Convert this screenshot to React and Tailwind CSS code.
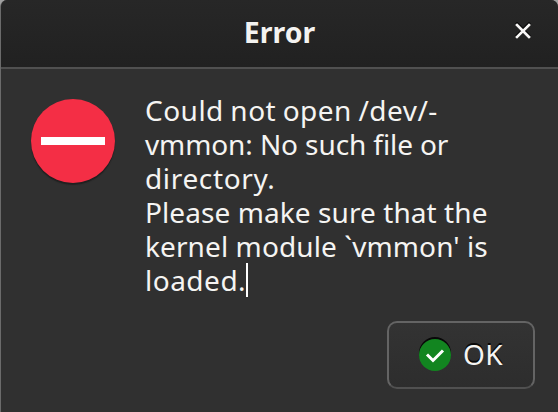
const lines = [
  { text: "Could not open /dev/-", style: "tracking-[0.48px] [word-spacing:-1.2px]" },
  { text: "vmmon: No such file or", style: "tracking-[-0.1px]" },
  { text: "directory.", style: "tracking-[0.65px]" },
  { text: "Please make sure that the", style: "tracking-[0.08px]" },
  { text: "kernel module `vmmon' is", style: "tracking-[0.1px]" },
  { text: "loaded.", style: "tracking-[0.5px]" },
];

function TitleBar() {
  return (
    <header className="grid h-[69px] shrink-0 grid-cols-[1fr_auto_1fr] items-center border-b-2 border-[#505050] bg-linear-to-b from-[#272727] to-[#212121] pb-[3px]">
      <span />
      <h1 className="text-[28.5px] leading-9 font-bold text-[#f4f3f1]">Error</h1>
      <button aria-label="Close" className="mr-[26px] mb-[2px] justify-self-end">
        <svg width="18" height="18" viewBox="0 0 18 18" fill="none" strokeWidth="2.6" strokeLinecap="square">
          <path d="M3 1.5 15 13.5M15 1.5 3 13.5" stroke="#080808" />
          <path d="M3 3 15 15M15 3 3 15" stroke="#f7f6f5" />
        </svg>
      </button>
    </header>
  );
}

export default function App() {
  return (
    <div className="h-[412px] w-[558px] overflow-hidden bg-[#a0a0a0] font-['Noto_Sans',sans-serif]">
      <div className="flex h-full flex-col overflow-hidden rounded-t-[7px] border-l border-[#6b6b6b] bg-[#303030]">
        <TitleBar />
        <main className="flex pt-[24px] pl-[30px]">
          <div className="mt-[6px] flex h-[84px] w-[84px] shrink-0 items-center justify-center rounded-full bg-[#f42e45] shadow-[0_2px_1px_#202020]">
            <div className="h-2 w-16 bg-white" />
          </div>
          <div className="ml-[30px] text-[28px] leading-[34px] whitespace-nowrap text-[#f5f4f2]">
            {lines.map((line, i) => (
              <div key={line.text} className="flex h-[34px]">
                <span className={line.style}>{line.text}</span>
                {i === lines.length - 1 && <i className="h-[34px] w-[2px] bg-white" />}
              </div>
            ))}
          </div>
        </main>
        <footer className="mt-[24px] flex justify-end pr-[23px]">
          <button className="flex h-[68px] w-[148px] items-center rounded-[10px] border-2 border-[#646464] border-b-[#505050] bg-linear-to-b from-[#333333] to-[#2d2d2d] pl-[30px]">
            <svg className="mb-[2px] shrink-0" width="32" height="34" viewBox="0 0 32 34">
              <circle cx="16" cy="16" r="16" fill="#080808" />
              <circle cx="16" cy="18" r="16" fill="#128520" />
              <path d="m8 17.5 6 6 10-10" fill="none" stroke="white" strokeWidth="3" />
            </svg>
            <span className="mb-[2px] ml-3 text-[28px] leading-[34px] tracking-[0.5px] text-[#f5f4f2] [text-shadow:0_-2px_0_#080808]">OK</span>
          </button>
        </footer>
      </div>
    </div>
  );
}
